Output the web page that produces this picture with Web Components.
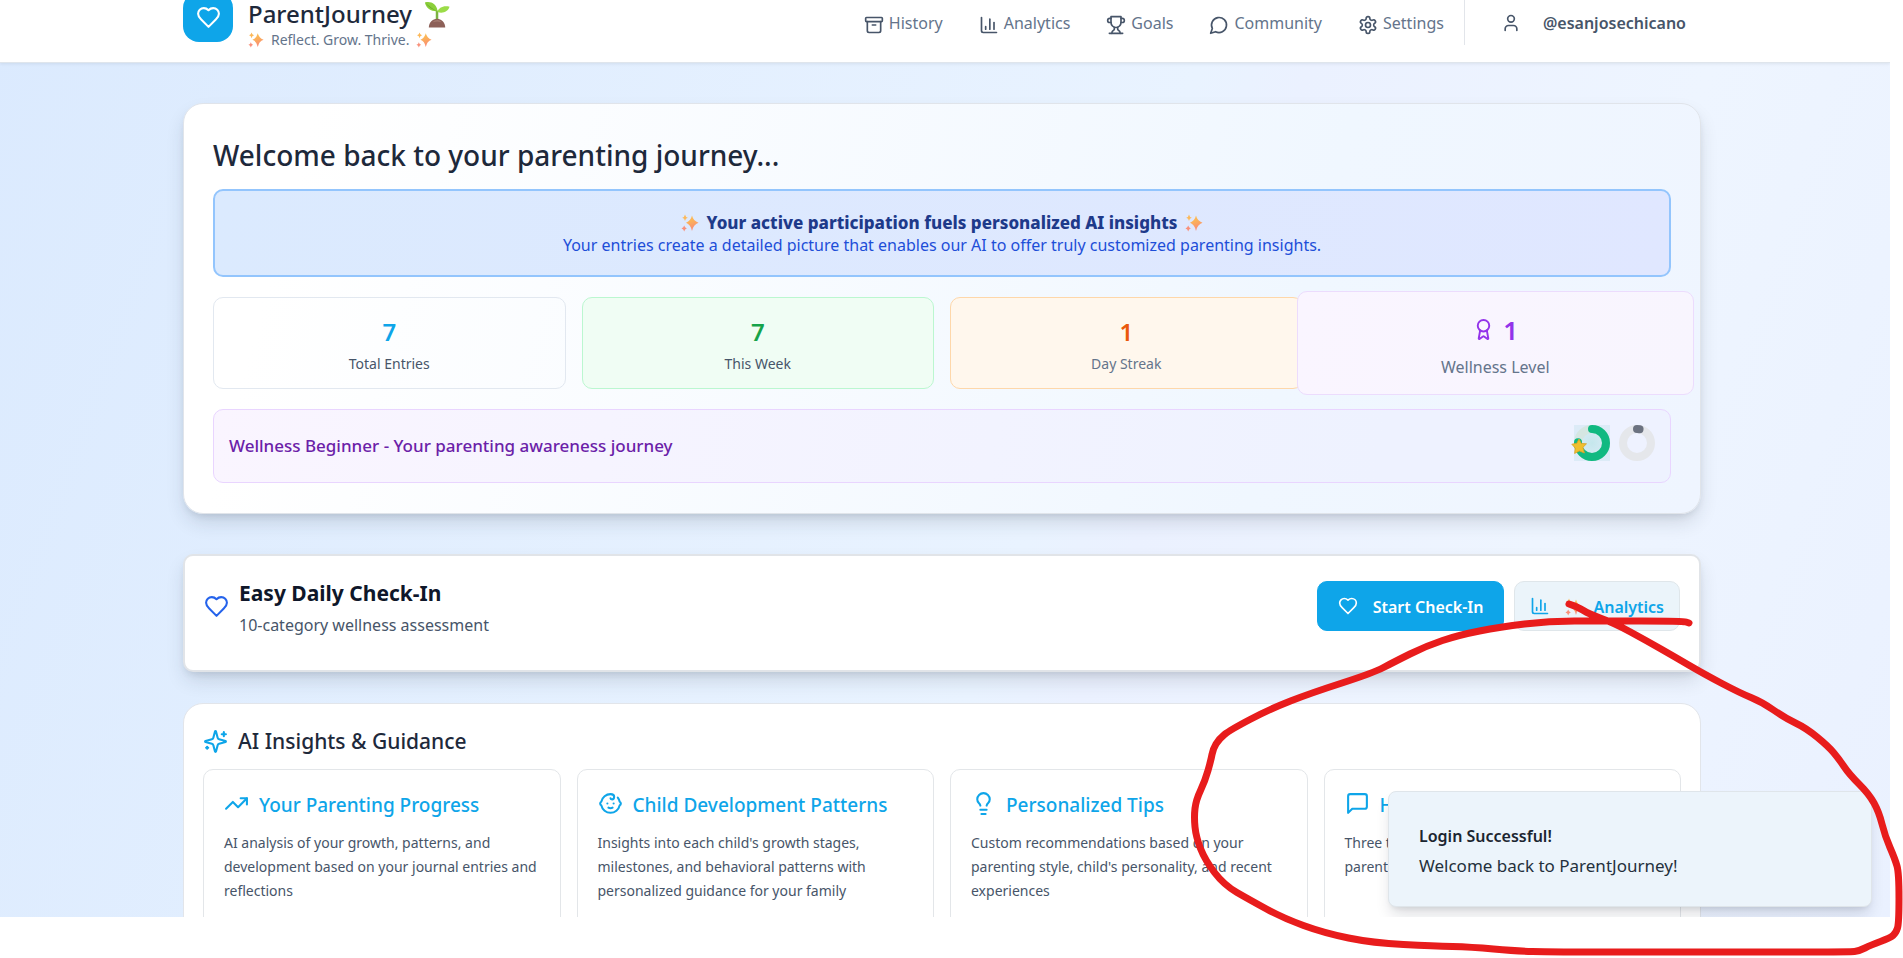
<!DOCTYPE html>
<html lang="en">
<head>
<meta charset="utf-8">
<title>ParentJourney</title>
<style>
  body { margin: 0; background: #fff; overflow: hidden; font-family: "Noto Sans", "Open Sans", sans-serif; color: #1e293b; }
</style>
</head>
<body>
<pj-app></pj-app>
<script>
const define = (name, html, setup) => {
  const template = document.createElement('template');
  template.innerHTML = html;
  customElements.define(name, class extends HTMLElement {
    connectedCallback() {
      if (this.shadowRoot) return;
      this.attachShadow({ mode: 'open' }).append(template.content.cloneNode(true));
      if (setup) setup(this, this.shadowRoot);
    }
  });
};

/* ---------- icons ---------- */
const ICONS = {
  heart: '<path d="M19 14c1.49-1.46 3-3.21 3-5.5A5.5 5.5 0 0 0 16.5 3c-1.76 0-3 .5-4.5 2-1.5-1.5-2.74-2-4.5-2A5.5 5.5 0 0 0 2 8.500c0 2.300 1.500 4.050 3 5.500l7 7Z"/>',
  archive: '<rect x="2" y="3" width="20" height="5" rx="1"/><path d="M4 8v11a2 2 0 0 0 2 2h12a2 2 0 0 0 2-2V8"/><path d="M10 12h4"/>',
  chart: '<path d="M3 3v16a2 2 0 0 0 2 2h16"/><path d="M18 17V9"/><path d="M13 17V5"/><path d="M8 17v-3"/>',
  trophy: '<path d="M6 9H4.500a2.500 2.500 0 0 1 0-5H6"/><path d="M18 9h1.500a2.500 2.500 0 0 0 0-5H18"/><path d="M4 22h16"/><path d="M10 14.660V17c0 .55-.47.98-.97 1.210C7.850 18.750 7 20.240 7 22"/><path d="M14 14.660V17c0 .55.47.98.97 1.210C16.150 18.750 17 20.240 17 22"/><path d="M18 2H6v7a6 6 0 0 0 12 0V2Z"/>',
  bubble: '<path d="M7.900 20A9 9 0 1 0 4 16.100L2 22Z"/>',
  gear: '<path d="M12.220 2h-.44a2 2 0 0 0-2 2v.18a2 2 0 0 1-1 1.730l-.43.25a2 2 0 0 1-2 0l-.15-.08a2 2 0 0 0-2.730.73l-.22.38a2 2 0 0 0 .73 2.730l.15.1a2 2 0 0 1 1 1.720v.51a2 2 0 0 1-1 1.740l-.15.09a2 2 0 0 0-.73 2.730l.22.38a2 2 0 0 0 2.730.73l.15-.08a2 2 0 0 1 2 0l.43.25a2 2 0 0 1 1 1.730V20a2 2 0 0 0 2 2h.44a2 2 0 0 0 2-2v-.18a2 2 0 0 1 1-1.730l.43-.25a2 2 0 0 1 2 0l.15.08a2 2 0 0 0 2.730-.73l.22-.39a2 2 0 0 0-.73-2.730l-.15-.08a2 2 0 0 1-1-1.740v-.5a2 2 0 0 1 1-1.740l.15-.09a2 2 0 0 0 .73-2.730l-.22-.38a2 2 0 0 0-2.730-.73l-.15.08a2 2 0 0 1-2 0l-.43-.25a2 2 0 0 1-1-1.730V4a2 2 0 0 0-2-2z"/><circle cx="12" cy="12" r="3"/>',
  user: '<path d="M19 21v-2a4 4 0 0 0-4-4H9a4 4 0 0 0-4 4v2"/><circle cx="12" cy="7" r="4"/>',
  award: '<path d="m15.477 12.890 1.515 8.526a.5.5 0 0 1-.81.47l-3.580-2.687a1 1 0 0 0-1.197 0l-3.586 2.686a.5.5 0 0 1-.81-.469l1.514-8.526"/><circle cx="12" cy="8" r="6"/>',
  sparkles: '<path d="M9.937 15.500A2 2 0 0 0 8.500 14.063l-6.135-1.582a.5.5 0 0 1 0-.962L8.500 9.936A2 2 0 0 0 9.937 8.500l1.582-6.135a.5.5 0 0 1 .963 0L14.063 8.500A2 2 0 0 0 15.500 9.937l6.135 1.581a.5.5 0 0 1 0 .964L15.500 14.063a2 2 0 0 0-1.437 1.437l-1.582 6.135a.5.5 0 0 1-.963 0z"/><path d="M20 3v4"/><path d="M22 5h-4"/><path d="M4 17v2"/><path d="M5 18H3"/>',
  trend: '<path d="M22 7 13.500 15.500 8.500 10.500 2 17"/><path d="M16 7h6v6"/>',
  baby: '<path d="M9 12h.01"/><path d="M15 12h.01"/><path d="M10 16c.5.3 1.200.5 2 .5s1.500-.2 2-.5"/><path d="M19 6.300a9 9 0 0 1 1.800 3.900 2 2 0 0 1 0 3.600 9 9 0 0 1-17.600 0 2 2 0 0 1 0-3.600A9 9 0 0 1 12 3c2 0 3.500 1.100 3.500 2.500s-.9 2.500-2 2.500c-.8 0-1.500-.4-1.500-1"/>',
  bulb: '<path d="M15 14c.2-1 .7-1.700 1.500-2.500 1-.9 1.500-2.200 1.500-3.500A6 6 0 0 0 6 8c0 1 .2 2.200 1.500 3.500.7.7 1.300 1.500 1.500 2.500"/><path d="M9 18h6"/><path d="M10 22h4"/>',
  message: '<path d="M21 15a2 2 0 0 1-2 2H7l-4 4V5a2 2 0 0 1 2-2h14a2 2 0 0 1 2 2z"/>'
};

define('pj-icon', `
<style>
  :host { display: inline-block; flex: none; width: 20px; height: 20px; }
  svg { display: block; width: 100%; height: 100%; fill: none; stroke: currentColor; stroke-width: 2; stroke-linecap: round; stroke-linejoin: round; }
</style>
<svg viewBox="0 0 24 24" aria-hidden="true"></svg>`,
(host, root) => { root.querySelector('svg').innerHTML = ICONS[host.getAttribute('name')]; });

define('pj-twinkle', `
<style>
  :host { display: inline-block; flex: none; width: 18px; height: 18px; }
  svg { display: block; width: 100%; height: 100%; }
</style>
<svg viewBox="0 0 18 18" role="img" aria-label="sparkles">
  <defs><linearGradient id="g" x1="0" y1="0" x2="0.3" y2="1"><stop offset="0" stop-color="#fcc54e"/><stop offset="0.500" stop-color="#fbae5c"/><stop offset="1" stop-color="#f98a78"/></linearGradient></defs>
  <path fill="url(#g)" d="M11 1.500q1.300 5.500 6.500 7.200q-5.200 1.700-6.500 8.300q-1.300-6.600-6-8.300q4.700-1.700 6-7.200z"/>
  <path fill="#fcb95a" d="M4 .5q.4 2.600 2.800 3.200q-2.400.6-2.800 3.200q-.4-2.600-2.800-3.200q2.400-.6 2.800-3.200z"/>
  <path fill="#f9907a" d="M3.200 11.500q.5 2.300 2.600 2.900q-2.100.6-2.600 3.100q-.5-2.500-2.700-3.100q2.200-.6 2.700-2.900z"/>
</svg>`);

define('pj-sprout', `
<style>
  :host { display: inline-block; flex: none; width: 27px; height: 27px; }
  svg { display: block; width: 100%; height: 100%; }
</style>
<svg viewBox="0 0 28 28" role="img" aria-label="seedling">
  <path d="M13.500 20V10" stroke="#7cb342" stroke-width="2.600" fill="none"/>
  <path fill="#8bcf3a" d="M14 10.500C8 11 2 8 1 1.500c6-1.500 12 1 13 9z"/>
  <path fill="#9bdc48" d="M14 11.500c1-4.500 6-7 12.500-5.500-1.500 5-7 7.500-12.500 5.500z"/>
  <path fill="#6aa92f" d="M14 10.500C10 9 5 5 1 1.500c4 5 8 8 13 9z"/>
  <path fill="#8d6058" d="M5 27.500c0-5 4-9 8.500-9s8.500 4 8.500 9z"/>
  <path fill="#a67c72" d="M9 22c3-3 7-3 9 0-3-1-6-1-9 0z"/>
</svg>`);

/* ---------- header ---------- */
define('pj-nav-link', `
<style>
  :host { display: block; }
  a { display: flex; align-items: center; gap: 5px; font-size: 16px; line-height: 24px; color: #64748b; text-decoration: none; }
  pj-icon { color: #475569; margin-top: 4px; }
</style>
<a href="#"><pj-icon></pj-icon><slot></slot></a>`,
(host, root) => {
  const icon = document.createElement('pj-icon');
  icon.setAttribute('name', host.getAttribute('icon'));
  root.querySelector('pj-icon').replaceWith(icon);
});

define('pj-header', `
<style>
  :host { display: block; position: relative; background: #fff; border-bottom: 1px solid #dfe5ec; box-shadow: 0 1px 3px rgba(15,23,42,.08); margin-top: -14px; padding-right: 6px; }
  .row { display: flex; justify-content: space-between; max-width: 1518px; height: 64px; margin: 0 auto; padding: 6px 0; }
  .brand { display: flex; gap: 15px; }
  .logo { display: flex; align-items: center; justify-content: center; width: 50px; height: 50px; border-radius: 16px; background: #0ea5e9; color: #fff; }
  .logo pj-icon { width: 25px; height: 25px; }
  .name { display: flex; align-items: center; gap: 12px; margin: 8px 0 2px; font-size: 24px; line-height: 28px; font-weight: 500; }
  .tag { font-size: 14px; line-height: 20px; color: #64748b; display: flex; align-items: center; gap: 7px; }
  .tag pj-twinkle { width: 16px; height: 16px; }
  nav { display: flex; align-items: center; gap: 36px; }
  .links { display: flex; gap: 36px; margin-bottom: 2px; }
  .user { display: flex; align-items: center; gap: 22px; align-self: stretch; margin: 0 15px 11px -16px; padding: 9px 0 0 36px; border-left: 1px solid #e2e5ea; color: #475569; }
  .user a { font-size: 16px; font-weight: 600; line-height: 24px; color: inherit; text-decoration: none; }
</style>
<div class="row">
  <div class="brand">
    <div class="logo"><pj-icon name="heart"></pj-icon></div>
    <div>
      <div class="name">ParentJourney <pj-sprout></pj-sprout></div>
      <div class="tag"><pj-twinkle></pj-twinkle>Reflect. Grow. Thrive.<pj-twinkle></pj-twinkle></div>
    </div>
  </div>
  <nav>
    <div class="links">
      <pj-nav-link icon="archive">History</pj-nav-link>
      <pj-nav-link icon="chart">Analytics</pj-nav-link>
      <pj-nav-link icon="trophy">Goals</pj-nav-link>
      <pj-nav-link icon="bubble">Community</pj-nav-link>
      <pj-nav-link icon="gear">Settings</pj-nav-link>
    </div>
    <div class="user"><pj-icon name="user"></pj-icon><a href="#">@esanjosechicano</a></div>
  </nav>
</div>`);

/* ---------- welcome card ---------- */
define('pj-banner', `
<style>
  :host { display: block; border: 2px solid #93c5fd; border-radius: 10px; padding: 21px 20px 19px; text-align: center; background: linear-gradient(100deg, #dbeafe, #e0e7ff); font-size: 16px; line-height: 22px; color: #1d4ed8; }
  .lead { display: flex; justify-content: center; align-items: center; gap: 8px; font-size: 17px; font-weight: 800; color: #1e3a8a; }
  p { margin: 0; }
</style>
<div class="lead"><pj-twinkle></pj-twinkle><slot name="lead"></slot><pj-twinkle></pj-twinkle></div>
<p><slot></slot></p>`);

define('pj-stat', `
<style>
  :host { display: block; border: 1px solid #e2e8f0; border-radius: 10px; padding: 18px 16px 14px; text-align: center; }
  .value { display: flex; justify-content: center; align-items: center; gap: 8px; font-size: 24px; line-height: 32px; font-weight: 600; color: #0ea5e9; margin-bottom: 6px; }
  .label { font-size: 14px; line-height: 20px; color: #475569; }
  :host([tone="green"]) { background: #f0fdf4; border-color: #bbf7d0; }
  :host([tone="green"]) .value { color: #16a34a; }
  :host([tone="orange"]) { background: #fff7ed; border-color: #fed7aa; }
  :host([tone="orange"]) .value { color: #ea580c; }
  :host([tone="orange"]) .label, :host([tone="purple"]) .label { color: #64748b; }
  :host([tone="purple"]) { position: relative; background: linear-gradient(100deg, #faf5ff, #f8f5fe); border-color: #ecdcfd; margin: -6px -23px -6px -22px; padding: 22px 16px 17px; }
  :host([tone="purple"]) .value { color: #9333ea; font-size: 26px; margin-bottom: 11px; }
  :host([tone="purple"]) .label { font-size: 16px; }
  ::slotted(pj-icon) { width: 23px; height: 23px; margin-bottom: 2px; }
</style>
<div class="value"><slot></slot></div>
<div class="label"><slot name="label"></slot></div>`);

define('pj-ring', `
<style>
  :host { display: block; width: 36px; height: 36px; position: relative; }
  svg { display: block; width: 100%; height: 100%; overflow: visible; }
  :host([tone="green"]) { background: radial-gradient(circle, #c5e7ec, #dcebf7 70%); }
</style>
<svg viewBox="0 0 36 36" aria-hidden="true"></svg>`,
(host, root) => {
  const green = host.getAttribute('tone') === 'green';
  const track = green ? '#d5e6e2' : '#e5e7eb';
  const bar = green ? '#10b981' : '#6b7280';
  const length = green ? 76 : 3;
  root.querySelector('svg').innerHTML =
    `<circle cx="18" cy="18" r="14" fill="none" stroke="${track}" stroke-width="8"/>
     <circle cx="18" cy="18" r="14" fill="none" stroke="${bar}" stroke-width="8" stroke-linecap="round" pathLength="100" stroke-dasharray="${length} 100" transform="rotate(-90 18 18)"/>` +
    (green ? '<path fill="#efbf2e" stroke="#d9a128" stroke-width=".8" stroke-linejoin="round" d="M5 14l2.300 4.400 5.200.4-3.600 3.600 1.500 5.600-5.100-2.100-4.700 2.600.6-5.400-3.400-3.900 5-.9z"/>' : '');
});

define('pj-welcome', `
<style>
  :host { display: block; border: 1px solid #e0e4ea; border-radius: 20px; padding: 31px 29px 30px; background: linear-gradient(105deg, #fff 8%, #f0f7ff 72%, #eff5ff); box-shadow: 0 10px 20px -3px rgba(30,41,59,.16), 0 4px 8px -4px rgba(30,41,59,.16); }
  h1 { margin: 0 0 14px; font-size: 28px; line-height: 40px; font-weight: 500; }
  .stats { display: grid; grid-template-columns: repeat(4, 1fr); gap: 16px; margin: 20px 0; }
  .level { display: flex; justify-content: space-between; align-items: center; gap: 16px; border: 1px solid #e9d5ff; border-radius: 10px; padding: 0 15px; height: 72px; background: linear-gradient(100deg, #faf5ff, #eef2ff 80%); color: #6b21a8; font-size: 17px; font-weight: 500; line-height: 24px; }
  .rings { display: flex; gap: 9px; margin-bottom: 7px; }
</style>
<h1>Welcome back to your parenting journey...</h1>
<pj-banner><span slot="lead">Your active participation fuels personalized AI insights</span>Your entries create a detailed picture that enables our AI to offer truly customized parenting insights.</pj-banner>
<div class="stats">
  <pj-stat>7<span slot="label">Total Entries</span></pj-stat>
  <pj-stat tone="green">7<span slot="label">This Week</span></pj-stat>
  <pj-stat tone="orange">1<span slot="label">Day Streak</span></pj-stat>
  <pj-stat tone="purple"><pj-icon name="award"></pj-icon>1<span slot="label">Wellness Level</span></pj-stat>
</div>
<div class="level"><span>Wellness Beginner - Your parenting awareness journey</span><div class="rings"><pj-ring tone="green"></pj-ring><pj-ring></pj-ring></div></div>`);

/* ---------- check-in card ---------- */
define('pj-button', `
<style>
  :host { display: block; }
  button { display: flex; align-items: center; gap: 15px; height: 50px; box-sizing: border-box; padding: 2px 20px 0; border: 1px solid #0ea5e9; border-radius: 10px; background: #0ea5e9; color: #fff; font: 600 16px/24px "Noto Sans", "Open Sans", sans-serif; }
  :host([tone="soft"]) button { background: #ebf4fa; border-color: #dfe6ea; color: #0ea5e9; padding: 2px 15px 0; }
  ::slotted([slot="icon"]) { margin-bottom: 2px; }
  .text { display: flex; align-items: center; gap: 10px; }
</style>
<button type="button"><slot name="icon"></slot><span class="text"><slot></slot></span></button>`);

define('pj-checkin', `
<style>
  :host { display: flex; align-items: center; justify-content: space-between; border: 2px solid #e1e4e8; border-radius: 10px; padding: 23px 19px 33px; background: #fff; box-shadow: 0 10px 20px -3px rgba(30,41,59,.16), 0 4px 8px -4px rgba(30,41,59,.16); }
  .info, .actions { display: flex; align-items: center; }
  .info { gap: 10px; }
  .info pj-icon { width: 25px; height: 25px; margin-bottom: 4px; color: #2563eb; }
  h2 { margin: 0 0 6px; font-size: 21px; line-height: 28px; font-weight: 700; color: #0f172a; }
  p { margin: 0; font-size: 16px; line-height: 24px; color: #475569; }
  .actions { gap: 10px; margin-bottom: 4px; }
</style>
<div class="info"><pj-icon name="heart"></pj-icon><div><h2>Easy Daily Check-In</h2><p>10-category wellness assessment</p></div></div>
<div class="actions">
  <pj-button><pj-icon slot="icon" name="heart"></pj-icon>Start Check-In</pj-button>
  <pj-button tone="soft"><pj-icon slot="icon" name="chart"></pj-icon><pj-twinkle></pj-twinkle>Analytics</pj-button>
</div>`);

/* ---------- insights card ---------- */
define('pj-insight', `
<style>
  :host { display: block; min-width: 0; border: 1px solid #e3e6e9; border-radius: 10px; padding: 21px 20px; min-height: 160px; background: #fff; }
  h3 { display: flex; gap: 10px; margin: 0 0 12px; font-size: 19px; line-height: 28px; font-weight: 500; color: #0ea5e9; white-space: nowrap; }
  ::slotted(pj-icon) { width: 25px; height: 25px; }
  p { margin: 0; font-size: 14px; line-height: 24px; color: #475569; }
</style>
<h3><slot name="icon"></slot><slot name="title"></slot></h3>
<p><slot></slot></p>`);

define('pj-insights', `
<style>
  :host { display: block; border: 1px solid #e2e5ea; border-radius: 20px; padding: 21px 19px; background: #fff; }
  h2 { display: flex; align-items: center; gap: 10px; margin: 0 0 12px; font-size: 21px; line-height: 32px; font-weight: 500; }
  h2 pj-icon { width: 25px; height: 25px; color: #0ea5e9; }
  .grid { display: grid; grid-template-columns: repeat(4, 1fr); gap: 16px; }
</style>
<h2><pj-icon name="sparkles"></pj-icon>AI Insights &amp; Guidance</h2>
<div class="grid">
  <pj-insight><pj-icon slot="icon" name="trend"></pj-icon><span slot="title">Your Parenting Progress</span>AI analysis of your growth, patterns, and development based on your journal entries and reflections</pj-insight>
  <pj-insight><pj-icon slot="icon" name="baby"></pj-icon><span slot="title">Child Development Patterns</span>Insights into each child's growth stages, milestones, and behavioral patterns with personalized guidance for your family</pj-insight>
  <pj-insight><pj-icon slot="icon" name="bulb"></pj-icon><span slot="title">Personalized Tips</span>Custom recommendations based on your parenting style, child's personality, and recent experiences</pj-insight>
  <pj-insight><pj-icon slot="icon" name="message"></pj-icon><span slot="title">H</span>Three t<br>parent</pj-insight>
</div>`);

/* ---------- toast and pen annotation ---------- */
define('pj-toast', `
<style>
  :host { display: block; box-sizing: border-box; width: 484px; border: 1px solid #dfe5ea; border-radius: 8px; padding: 32px 30px 28px; background: #ecf4fb; color: #24303c; box-shadow: 0 10px 16px -3px rgba(15,23,42,.14), 0 4px 6px -4px rgba(15,23,42,.14); line-height: 24px; }
  strong { display: block; margin-bottom: 6px; font-size: 16px; font-weight: 600; color: #1b2530; }
  p { margin: 0; font-size: 17px; }
</style>
<div role="status"><strong><slot name="title"></slot></strong><p><slot></slot></p></div>`);

define('pj-pen', `
<style>
  :host { display: block; position: absolute; left: 0; top: 0; pointer-events: none; }
  svg { display: block; fill: none; stroke: #e81c1c; stroke-width: 7; stroke-linecap: round; stroke-linejoin: round; }
</style>
<svg width="1903" height="958" viewBox="0 0 1903 958" aria-hidden="true"><path/></svg>`,
(host, root) => {
  const points = [[1569,604],[1578,607],[1589,614],[1614,623],[1647,641],[1675,657],[1704,674],[1740,693],[1762,702],[1785,718],[1806,728],[1828,746],[1839,759],[1849,774],[1869,794],[1879,812],[1885,836],[1895,859],[1899,873],[1899,923],[1896,933],[1890,938],[1871,945],[1859,951],[1850,952],[1700,952],[1549,952],[1516,951],[1471,947],[1434,946],[1373,943],[1324,933],[1283,918],[1250,900],[1224,885],[1205,860],[1196,837],[1194,817],[1196,800],[1205,781],[1211,760],[1213,749],[1219,739],[1230,730],[1270,709],[1311,693],[1373,673],[1394,662],[1426,646],[1459,635],[1500,627],[1549,621],[1600,621],[1683,621],[1689,623]];
  let d = `M${points[0]}`;
  for (let i = 1; i < points.length - 1; i++) {
    const [x, y] = points[i], [nx, ny] = points[i + 1];
    d += `Q${x} ${y} ${(x + nx) / 2} ${(y + ny) / 2}`;
  }
  root.querySelector('path').setAttribute('d', d + `L${points.at(-1)}`);
});

/* ---------- page ---------- */
define('pj-app', `
<style>
  :host { display: block; position: relative; height: 100vh; overflow: hidden; }
  .screen { display: flow-root; position: relative; height: calc(100vh - 41px); margin-right: 13px; overflow: hidden; background: linear-gradient(110deg, #dbeafe, #e9f3ff 55%, #ebf1ff 60%, #eef5ff 78%, #eaf1ff); }
  main { display: flex; flex-direction: column; max-width: 1518px; margin: 0 auto; padding: 40px 0; }
  .wrap { padding-right: 6px; }
  pj-checkin { margin: 40px 0 31px; }
  pj-toast { position: absolute; right: 18px; bottom: 10px; }
</style>
<div class="screen">
  <pj-header></pj-header>
  <div class="wrap"><main>
    <pj-welcome></pj-welcome>
    <pj-checkin></pj-checkin>
    <pj-insights></pj-insights>
  </main></div>
  <pj-toast><span slot="title">Login Successful!</span>Welcome back to ParentJourney!</pj-toast>
</div>
<pj-pen></pj-pen>`);
</script>
</body>
</html>
